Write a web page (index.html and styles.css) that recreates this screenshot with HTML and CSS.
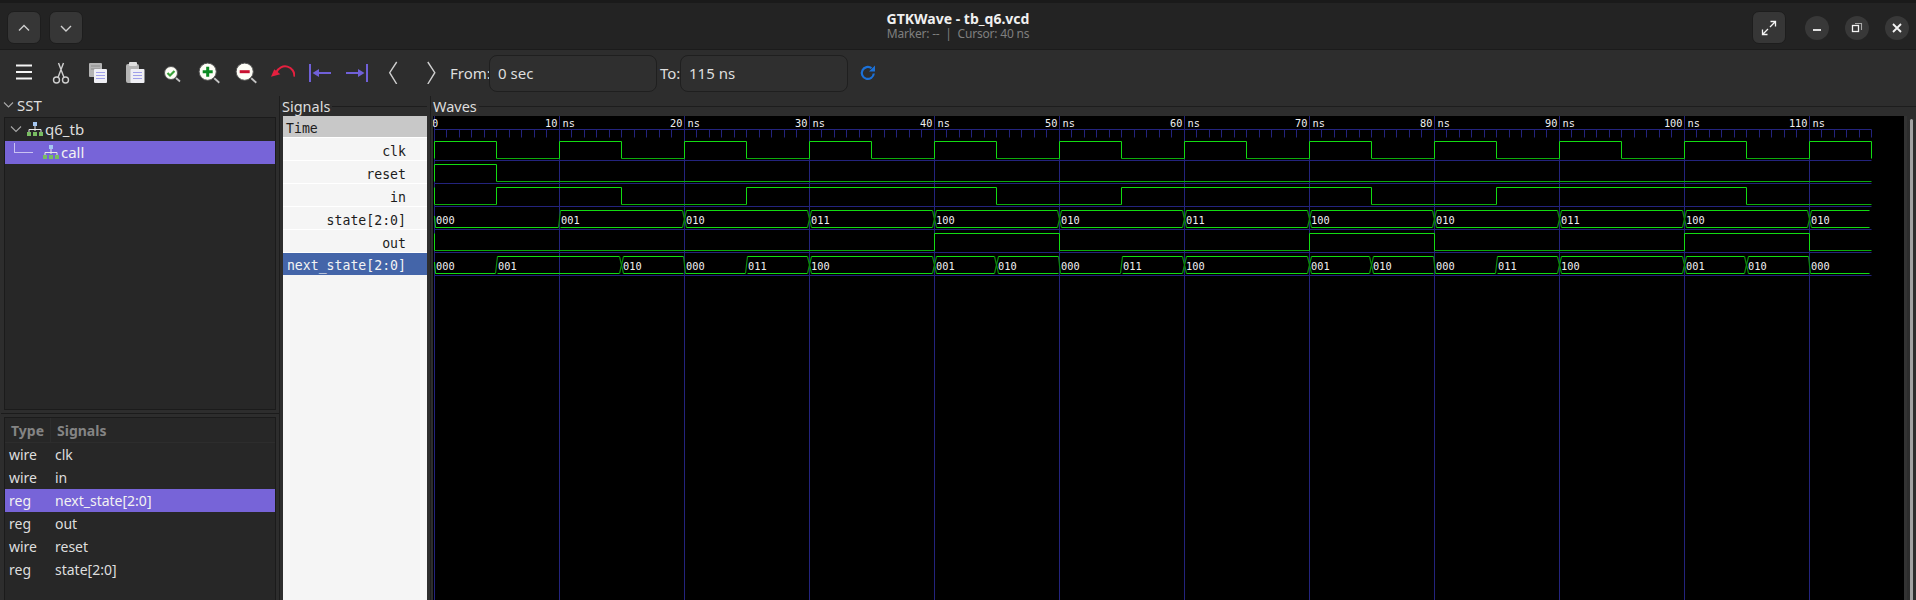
FILE: index.html
```html
<!DOCTYPE html>
<html lang="en">
<head>
    <meta charset="UTF-8">
    <meta name="viewport" content="width=device-width, initial-scale=1.0">
    <title>GTKWave - tb_q6.vcd</title>
    <link rel="stylesheet" href="styles.css">
</head>
<body>
    <div class="app">
        <header class="titlebar">
            <div class="title-left">
                <button class="tb-btn">
                    <svg width="16" height="16" viewBox="0 0 16 16"><path d="M3 10.5 8 5.5l5 5" class="stroke-light"/></svg>
                </button>
                <button class="tb-btn">
                    <svg width="16" height="16" viewBox="0 0 16 16"><path d="M3 6l5 5 5-5" class="stroke-light"/></svg>
                </button>
            </div>
            <div class="title-center">
                <div class="title-main">GTKWave - tb_q6.vcd</div>
                <div class="title-sub">Marker: -- &nbsp;|&nbsp; Cursor: 40 ns</div>
            </div>
            <div class="title-right">
                <button class="tb-btn">
                    <svg width="16" height="16" viewBox="0 0 16 16"><path d="M9.5 1.5h5v5M14.5 1.5 9 7M6.5 14.5h-5v-5M1.5 14.5 7 9" class="stroke-white"/></svg>
                </button>
                <button class="win-btn win-first">
                    <svg width="16" height="16" viewBox="0 0 16 16"><path d="M4 10h8" class="stroke-white wide"/></svg>
                </button>
                <button class="win-btn">
                    <svg width="16" height="16" viewBox="0 0 16 16"><rect x="3.5" y="5.5" width="6" height="6" class="stroke-white"/><path d="M6 3.5h6.5V10" class="stroke-dim"/></svg>
                </button>
                <button class="win-btn">
                    <svg width="16" height="16" viewBox="0 0 16 16"><path d="M4 4l8 8M12 4l-8 8" class="stroke-white wide"/></svg>
                </button>
            </div>
        </header>

        <div class="toolbar">
            <span class="tool">
                <svg width="24" height="24" viewBox="0 0 24 24"><path d="M4 5.5h16M4 12h16M4 18.5h16" class="stroke-white wide"/></svg>
            </span>
            <span class="tool">
                <svg width="24" height="24" viewBox="0 0 24 24">
                    <circle cx="7.5" cy="20" r="3" class="stroke-light"/><circle cx="16.5" cy="20" r="3" class="stroke-light"/>
                    <path d="M9 17.5 14.5 3M15 17.5 9.5 3" class="stroke-light"/>
                </svg>
            </span>
            <span class="tool">
                <svg width="24" height="24" viewBox="0 0 24 24">
                    <rect x="3" y="3" width="13" height="14" rx="1" class="doc-back"/>
                    <path d="M5 6h9M5 9h9" class="doc-back-line"/>
                    <rect x="8" y="9" width="13" height="14" rx="1" class="doc-front"/>
                    <path d="M10 12.5h9M10 15.5h9M10 18.5h9" class="doc-line"/>
                </svg>
            </span>
            <span class="tool">
                <svg width="24" height="24" viewBox="0 0 24 24">
                    <rect x="3" y="4" width="13" height="19" rx="2" class="doc-back"/>
                    <rect x="6" y="2" width="8" height="4" rx="1" class="doc-clip"/>
                    <rect x="7.5" y="9" width="14" height="14" rx="1" class="doc-front"/>
                    <path d="M10 12.5h9M10 15.5h9M10 18.5h9" class="doc-line"/>
                </svg>
            </span>
            <span class="tool">
                <svg width="24" height="24" viewBox="0 0 24 24">
                    <path d="M16 18l4 3.5" class="lens-handle"/>
                    <circle cx="11" cy="13" r="6.5" class="lens"/>
                    <path d="M7.5 13l2.500 2.500 4.500-4.500" class="lens-check"/>
                </svg>
            </span>
            <span class="tool">
                <svg width="24" height="24" viewBox="0 0 24 24">
                    <path d="M17.3 18.3l5 4.4" class="lens-handle"/>
                    <circle cx="10.7" cy="11.7" r="8.6" class="lens"/>
                    <path d="M5.7 11.7h10M10.7 6.7v10" class="lens-plus"/>
                </svg>
            </span>
            <span class="tool">
                <svg width="24" height="24" viewBox="0 0 24 24">
                    <path d="M17.3 18.3l5 4.4" class="lens-handle"/>
                    <circle cx="10.7" cy="11.7" r="8.6" class="lens"/>
                    <path d="M5.7 11.7h10" class="lens-minus"/>
                </svg>
            </span>
            <span class="tool">
                <svg width="24" height="24" viewBox="0 0 24 24">
                    <path d="M23.300 16.700A9.300 9.300 0 0 0 5.500 12" class="undo-arc"/>
                    <path d="M0 16.700 3.300 9.300 9.300 14.300Z" class="undo-head"/>
                </svg>
            </span>
            <span class="tool">
                <svg width="24" height="24" viewBox="0 0 24 24">
                    <path d="M2 4v18" class="jump-bar"/><path d="M10 13h13" class="jump-bar"/>
                    <path d="M4.500 13 11 9v8Z" class="jump-head"/>
                </svg>
            </span>
            <span class="tool">
                <svg width="24" height="24" viewBox="0 0 24 24">
                    <path d="M22 4v18" class="jump-bar"/><path d="M1 13h13" class="jump-bar"/>
                    <path d="M19.500 13 13 9v8Z" class="jump-head"/>
                </svg>
            </span>
            <span class="tool">
                <svg width="24" height="24" viewBox="0 0 24 24"><path d="M14.700 2 7.700 12.700 14.700 24" class="stroke-light"/></svg>
            </span>
            <span class="tool">
                <svg width="24" height="24" viewBox="0 0 24 24"><path d="M8.800 2 15.800 12.700 8.800 24" class="stroke-light"/></svg>
            </span>

            <label class="range-label from-label">From:</label>
            <input class="range-input" type="text" value="0 sec">
            <label class="range-label to-label">To:</label>
            <input class="range-input" type="text" value="115 ns">
            <span class="reload">
                <svg width="18" height="18" viewBox="0 0 18 18">
                    <path d="M14.800 9.500A6 6 0 1 1 12.500 4.200" class="reload-arc"/>
                    <path d="M16 1.500V7.500H10Z" class="reload-head"/>
                </svg>
            </span>
        </div>

        <main class="panes">
            <section class="sst-pane">
                <div class="sst-head">
                    <svg width="12" height="12" viewBox="0 0 12 12"><path d="M1 3.500 5.500 8 10 3.500" class="stroke-dim"/></svg>
                    <span>SST</span>
                </div>
                <div class="tree-box">
                    <div class="tree-row">
                        <svg class="tree-caret" width="12" height="12" viewBox="0 0 12 12"><path d="M1 3.500 6 8.500 11 3.500" class="stroke-dim"/></svg>
                        <svg width="16" height="14" viewBox="0 0 16 14">
                            <path d="M8 4v5M2 10V7.500h12V10" class="hier-line"/>
                            <rect x="6" y="0" width="4" height="4" class="hier-top"/>
                            <rect x="0" y="10" width="4" height="4" class="hier-leaf"/>
                            <rect x="6" y="10" width="4" height="4" class="hier-leaf"/>
                            <rect x="12" y="10" width="4" height="4" class="hier-leaf"/>
                        </svg>
                        <span>q6_tb</span>
                    </div>
                    <div class="tree-row child selected">
                        <span class="tree-guide"></span>
                        <svg width="16" height="14" viewBox="0 0 16 14">
                            <path d="M8 4v5M2 10V7.500h12V10" class="hier-line"/>
                            <rect x="6" y="0" width="4" height="4" class="hier-top"/>
                            <rect x="0" y="10" width="4" height="4" class="hier-leaf"/>
                            <rect x="6" y="10" width="4" height="4" class="hier-leaf"/>
                            <rect x="12" y="10" width="4" height="4" class="hier-leaf"/>
                        </svg>
                        <span>call</span>
                    </div>
                </div>
                <div class="signal-box">
                    <div class="signal-head">
                        <span class="col-type">Type</span>
                        <span class="col-name">Signals</span>
                    </div>
                    <div class="signal-row"><span class="col-type">wire</span><span>clk</span></div>
                    <div class="signal-row"><span class="col-type">wire</span><span>in</span></div>
                    <div class="signal-row selected"><span class="col-type">reg</span><span>next_state[2:0]</span></div>
                    <div class="signal-row"><span class="col-type">reg</span><span>out</span></div>
                    <div class="signal-row"><span class="col-type">wire</span><span>reset</span></div>
                    <div class="signal-row"><span class="col-type">reg</span><span>state[2:0]</span></div>
                </div>
            </section>

            <section class="names-pane">
                <div class="frame-title">Signals</div>
                <ul class="name-list">
                    <li class="name-time">Time</li>
                    <li>clk</li>
                    <li>reset</li>
                    <li>in</li>
                    <li>state[2:0]</li>
                    <li>out</li>
                    <li class="name-selected">next_state[2:0]</li>
                </ul>
            </section>

            <section class="waves-pane">
                <div class="frame-title">Waves</div>
                <div class="waves-body">
                    <svg id="waveCanvas" class="wave-canvas"></svg>
                    <div class="scrollbar"><div class="scroll-thumb"></div></div>
                </div>
            </section>
        </main>
    </div>

    <script src="script.js"></script>
</body>
</html>
```

FILE: styles.css
```css
* {
    box-sizing: border-box;
}

html, body {
    margin: 0;
    height: 100%;
    overflow: hidden;
}

body {
    background: #2d2d2d;
    color: #dedede;
    font-family: 'Noto Sans', 'Open Sans', sans-serif;
    font-size: 14px;
}

.app {
    display: flex;
    flex-direction: column;
    height: 600px;
}

/* shared icon strokes */
svg {
    display: block;
    fill: none;
}

.stroke-white { stroke: #f4f4f4; stroke-width: 1.3; }
.stroke-white.wide { stroke-width: 1.8; }
.stroke-light { stroke: #cfcfcf; stroke-width: 1.4; }
.stroke-dim { stroke: #a8a8a8; stroke-width: 1.1; }

/* title bar */
.titlebar {
    display: grid;
    grid-template-columns: 1fr auto 1fr;
    align-items: center;
    height: 50px;
    padding: 3px 7px 0;
    background: #232323;
    border-top: 3px solid #1a1a1a;
    border-bottom: 1px solid #1b1b1b;
}

.title-left {
    display: flex;
    gap: 8px;
}

.title-right {
    display: flex;
    align-items: center;
    justify-content: flex-end;
    gap: 16px;
}

.tb-btn {
    display: flex;
    align-items: center;
    justify-content: center;
    width: 34px;
    height: 33px;
    padding: 0;
    background: #363636;
    border: 1px solid #1d1d1d;
    border-radius: 7px;
}

.win-btn {
    display: flex;
    align-items: center;
    justify-content: center;
    width: 24px;
    height: 24px;
    padding: 0;
    background: #383838;
    border: none;
    border-radius: 50%;
}

.win-first {
    margin-left: 3px;
}

.title-center {
    text-align: center;
    line-height: 15px;
    margin-top: -3px;
}

.title-main {
    font-size: 14px;
    font-weight: 700;
    color: #f0f0f0;
}

.title-sub {
    font-size: 12px;
    letter-spacing: -0.2px;
    color: #7f7f7f;
}

/* toolbar */
.toolbar {
    display: flex;
    align-items: center;
    height: 46px;
    padding-left: 5px;
    background: #2d2d2d;
}

.tool {
    display: flex;
    justify-content: center;
    width: 37px;
    margin-top: -2px;
}

.doc-back { fill: #b4b4b4; }
.doc-back-line { stroke: #8c8c8c; }
.doc-clip { fill: #e0e0e0; }
.doc-front { fill: #efeff4; }
.doc-line { stroke: #a0a0ea; }

.lens { fill: #fdfdf6; stroke: #555; stroke-width: 1; }
.lens-handle { stroke: #c4c4c4; stroke-width: 1.8; }
.lens-check { stroke: #3aa13a; stroke-width: 2.2; }
.lens-plus { stroke: #0b8a22; stroke-width: 3; }
.lens-minus { stroke: #c8102e; stroke-width: 3; }

.undo-arc { stroke: #e5203f; stroke-width: 2; }
.undo-head { fill: #e5203f; }

.jump-bar { stroke: #7060d8; stroke-width: 2; }
.jump-head { fill: #7060d8; }

.range-label {
    font-size: 15px;
    color: #dedede;
}

.from-label {
    margin-left: 1px;
    width: 39px;
}

.to-label {
    width: 23px;
    padding-left: 3px;
}

.range-input {
    width: 168px;
    height: 37px;
    padding: 0 8px;
    font-family: inherit;
    font-size: 15px;
    color: #dedede;
    background: #2f2f2f;
    border: 1px solid #1f1f1f;
    border-radius: 8px;
    outline: none;
}

.reload {
    margin-left: 11px;
}

.reload-arc { stroke: #1c71d8; stroke-width: 2.2; }
.reload-head { fill: #1c71d8; }

/* panes */
.panes {
    display: flex;
    flex: 1;
    min-height: 0;
}

.sst-pane {
    display: flex;
    flex-direction: column;
    width: 280px;
    padding: 0 0 0 4px;
    border-right: 1px solid #1d1d1d;
}

.sst-head {
    display: flex;
    align-items: center;
    gap: 2px;
    height: 21px;
    margin-left: -1px;
    padding-bottom: 3px;
    font-size: 15px;
}

.tree-box {
    height: 293px;
    margin-right: 3px;
    background: #272727;
    border: 1px solid #1b1b1b;
}

.tree-row {
    position: relative;
    display: flex;
    align-items: center;
    gap: 2px;
    height: 23px;
    padding-left: 5px;
    padding-bottom: 2px;
    font-size: 15px;
}

.tree-caret {
    margin-right: 3px;
}

.tree-row.child {
    padding-left: 38px;
}

.tree-guide {
    position: absolute;
    top: 2px;
    left: 9px;
    width: 19px;
    height: 10px;
    border-left: 1px solid #c9c2f2;
    border-bottom: 1px solid #c9c2f2;
}

.selected {
    background: #7764d8;
    color: #f2f2f2;
}

.hier-line { stroke: #e8e8e8; stroke-width: 1; }
.hier-top { fill: #a6c8f2; }
.hier-leaf { fill: #79bd62; }

.signal-box {
    flex: 1;
    margin: 7px 3px 0 0;
    position: relative;
    background: #272727;
    border: 1px solid #1b1b1b;
    border-bottom: none;
}

.signal-box::before {
    content: "";
    position: absolute;
    top: -5px;
    left: -4px;
    right: -4px;
    border-top: 1px solid #1b1b1b;
}

.signal-head {
    display: flex;
    align-items: center;
    height: 25px;
    font-weight: 700;
    color: #848484;
    border-bottom: 1px solid #2d2d2d;
}

.signal-head .col-type {
    width: 46px;
    padding-left: 6px;
    border-right: 1px solid #2d2d2d;
    line-height: 25px;
}

.col-name {
    padding-left: 6px;
}

.signal-row {
    display: flex;
    align-items: center;
    height: 23px;
    padding-left: 4px;
}

.signal-row .col-type {
    width: 46px;
}

/* signal names */
.names-pane {
    display: flex;
    flex-direction: column;
    width: 151px;
    padding: 0 3px;
    border-right: 1px solid #1d1d1d;
}

.frame-title {
    display: flex;
    align-items: center;
    gap: 2px;
    height: 20px;
    font-size: 14.5px;
    margin-left: -1px;
}

.waves-pane .frame-title {
    margin-left: 0;
}

.frame-title::after {
    content: "";
    flex: 1;
    border-top: 1px solid #1d1d1d;
    margin-top: 1px;
}

.name-list {
    flex: 1;
    margin: 0;
    padding: 0;
    list-style: none;
    background: #f5f5f5;
    color: #1c1c1c;
    font-family: 'DejaVu Sans Mono', monospace;
    font-size: 13.2px;
}

.name-list li {
    height: 23px;
    line-height: 27px;
    padding-right: 21px;
    text-align: right;
    border-bottom: 1px solid #fff;
}

.name-list .name-time {
    height: 22px;
    line-height: 25px;
    padding-left: 3px;
    text-align: left;
    background: #c8c8c8;
}

.name-list .name-selected {
    height: 22px;
    line-height: 25px;
    padding-left: 3px;
    background: #4465a9;
    color: #f4f4f4;
    border-bottom: none;
}

/* waves */
.waves-pane {
    display: flex;
    flex-direction: column;
    flex: 1;
    min-width: 0;
    padding-left: 2px;
}

.waves-body {
    display: flex;
    flex: 1;
    min-height: 0;
}

.wave-canvas {
    flex: 1;
    height: 100%;
    min-width: 0;
    background: #000;
}

.grid { stroke: #23237d; stroke-width: 1; }
.wave-high { stroke: #12dc12; stroke-width: 1; }
.wave-low { stroke: #0cac0c; stroke-width: 1; }
.wave-cross { stroke: #0a8a0a; stroke-width: 1.2; }

.ruler-text, .value-text {
    fill: #f0f0f0;
    font-family: 'DejaVu Sans Mono', monospace;
    font-size: 10.3px;
}

.scrollbar {
    width: 12px;
    padding: 3px 3px 0;
    background: #2d2d2d;
    border-left: 3px solid #333;
}

.scroll-thumb {
    height: 100%;
    background: #a2a2a2;
    border-radius: 3px 3px 0 0;
}
```

FILE: script.js
```js
// wave data: times are in ns, values change at the listed time
const PX_PER_NS = 12.5;
const END_NS = 115;
const ORIGIN_X = 1;
const CANVAS_TOP = 116;
const ROW_HEIGHT = 23;

const binarySignals = [
    { row: 0, start: 1, changes: [5, 10, 15, 20, 25, 30, 35, 40, 45, 50, 55, 60, 65, 70, 75, 80, 85, 90, 95, 100, 105, 110, 115] },
    { row: 1, start: 1, changes: [5] },
    { row: 2, start: 0, changes: [5, 15, 25, 45, 55, 75, 85, 105] },
    { row: 4, start: 0, changes: [40, 50, 70, 80, 100, 110] }
];

const vectorSignals = [
    { row: 3, values: [[0, '000'], [10, '001'], [20, '010'], [30, '011'], [40, '100'], [50, '010'], [60, '011'], [70, '100'], [80, '010'], [90, '011'], [100, '100'], [110, '010']] },
    { row: 5, values: [[0, '000'], [5, '001'], [15, '010'], [20, '000'], [25, '011'], [30, '100'], [40, '001'], [45, '010'], [50, '000'], [55, '011'], [60, '100'], [70, '001'], [75, '010'], [80, '000'], [85, '011'], [90, '100'], [100, '001'], [105, '010'], [110, '000']] }
];

function timeX(ns) {
    return ORIGIN_X + Math.floor(ns * PX_PER_NS) + 0.5;
}

function highY(row) {
    return 141.5 + row * ROW_HEIGHT - CANVAS_TOP;
}

function lowY(row) {
    return 158.5 + row * ROW_HEIGHT - CANVAS_TOP;
}

function line(x1, y1, x2, y2, cls) {
    return `<line x1="${x1}" y1="${y1}" x2="${x2}" y2="${y2}" class="${cls}"/>`;
}

function text(x, y, value, cls, anchor) {
    return `<text x="${x}" y="${y}" class="${cls}" text-anchor="${anchor || 'start'}">${value}</text>`;
}

function drawGrid(parts) {
    const endX = timeX(END_NS);
    const rulerY = 129.5 - CANVAS_TOP;
    parts.push(line(ORIGIN_X, rulerY, endX, rulerY, 'grid'));

    for (let ns = 0; ns <= END_NS; ns++) {
        const x = timeX(ns);
        if (ns % 10 === 0) {
            parts.push(line(x, 0, x, 484, 'grid'));
        } else {
            parts.push(line(x, rulerY, x, rulerY + 8, 'grid'));
        }
    }

    for (let row = 0; row < 6; row++) {
        const y = 160.5 + row * ROW_HEIGHT - CANVAS_TOP;
        parts.push(line(ORIGIN_X, y, endX, y, 'grid'));
    }

    parts.push(text(-1, 11, '0', 'ruler-text'));
    for (let ns = 10; ns <= 110; ns += 10) {
        const x = timeX(ns);
        parts.push(text(x - 2, 11, ns, 'ruler-text', 'end'));
        parts.push(text(x + 3, 11, 'ns', 'ruler-text'));
    }
}

function drawBinary(parts, signal) {
    const hi = highY(signal.row);
    const lo = lowY(signal.row);
    const times = [0, ...signal.changes, END_NS];
    let level = signal.start;

    parts.push(line(timeX(0), hi, timeX(0), lo, 'wave-high'));
    for (let i = 0; i < times.length - 1; i++) {
        const x1 = timeX(times[i]);
        const x2 = timeX(times[i + 1]);
        const y = level ? hi : lo;
        parts.push(line(x1, y, x2, y, level ? 'wave-high' : 'wave-low'));
        if (i < signal.changes.length) {
            parts.push(line(x2, hi, x2, lo, 'wave-high'));
        }
        level = 1 - level;
    }
}

// half width of a value change: narrow when one side is all zero
function edgeWidth(a, b) {
    return a === '000' || b === '000' ? 1 : 2;
}

function drawVector(parts, signal) {
    const hi = highY(signal.row);
    const lo = lowY(signal.row);

    parts.push(line(timeX(0), hi + 5.5, timeX(0) + 1, lo, 'wave-high'));

    signal.values.forEach(([ns, value], i) => {
        const prev = signal.values[i - 1];
        const next = signal.values[i + 1];
        const isZero = value === '000';
        const x1 = timeX(ns) + (prev ? edgeWidth(prev[1], value) : 1);
        const x2 = next ? timeX(next[0]) - edgeWidth(value, next[1]) : timeX(END_NS) - 2;

        parts.push(line(x1, lo, x2, lo, 'wave-high'));
        if (!isZero) {
            parts.push(line(x1, hi, x2, hi, 'wave-high'));
        }
        parts.push(text(timeX(ns) + 1.5, lo - 3.5, value, 'value-text'));

        if (next) {
            const edge = edgeWidth(value, next[1]);
            if (!isZero) {
                parts.push(line(x2, hi, x2 + edge * 2, lo, 'wave-cross'));
            }
            if (next[1] !== '000') {
                parts.push(line(x2, lo, x2 + edge * 2, hi, 'wave-cross'));
            }
        }
    });
}

function renderWaves() {
    const parts = [];
    drawGrid(parts);
    binarySignals.forEach(signal => drawBinary(parts, signal));
    vectorSignals.forEach(signal => drawVector(parts, signal));
    document.getElementById('waveCanvas').innerHTML = parts.join('');
}

renderWaves();
```
